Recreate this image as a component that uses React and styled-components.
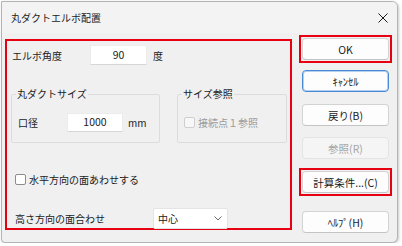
import styled, { createGlobalStyle, css } from 'styled-components'

const Global = createGlobalStyle`
  body {
    margin: 0;
    background: #ffffff;
    font-family: "Noto Sans CJK JP", "Noto Sans", sans-serif;
    font-size: 10px;
    color: #1b1b1b;
  }
`

const Window = styled.div`
  box-sizing: border-box;
  margin: 1px 0 0 1px;
  width: 397px;
  height: 242px;
  background: #f0f0f0;
  border: 1px solid #b4b4b4;
  border-radius: 0 6px 6px 4px;
  box-shadow: 1px 1px 3px rgba(0, 0, 0, 0.22);
  overflow: hidden;
`

const TitleBar = styled.div`
  height: 31px;
  display: flex;
  align-items: center;
  justify-content: space-between;
  padding: 0 9px;
  background: #f3f3f3;
  font-size: 10px;
`

const Body = styled.div`
  display: flex;
  padding: 2px 0 0 3px;
`

const Panel = styled.div`
  box-sizing: border-box;
  width: 287px;
  height: 191px;
  margin-top: 4px;
  border: 2px solid #e60012;
  padding: 4px 0 0 4px;
  display: flex;
  flex-direction: column;
`

const Row = styled.div`
  display: flex;
  align-items: center;
  margin-top: ${p => p.$mt || 0}px;
  margin-left: ${p => p.$ml || 0}px;
  height: ${p => p.$h || 20}px;
`

const Label = styled.span`
  width: ${p => p.$w}px;
  flex: none;
  white-space: nowrap;
`

const TextBox = styled.div`
  box-sizing: border-box;
  width: ${p => p.$w}px;
  height: ${p => p.$h || 20}px;
  background: #fff;
  border: 1px solid #ececec;
  border-bottom-color: #d6d6d6;
  display: flex;
  align-items: center;
  justify-content: center;
  font-size: 10.5px;
  padding-bottom: 2px;
`

const Unit = styled.span`
  margin-left: ${p => p.$ml || 6}px;
`

const Groups = styled.div`
  display: flex;
  gap: 17px;
  margin-top: 22px;
  align-items: stretch;
`

const Group = styled.fieldset`
  box-sizing: border-box;
  width: ${p => p.$w}px;
  margin: 0;
  border: 1px solid #dcdcdc;
  border-radius: 2px;
  padding: 12px 6px 10px 6px;
  min-width: 0;
`

const Legend = styled.legend`
  margin-left: -2px;
  padding: 0 1px;
  line-height: 14px;
  font-size: 10px;
`

const Box = styled.span`
  box-sizing: border-box;
  width: 11px;
  height: 11px;
  flex: none;
  background: #fff;
  border: 1px solid #8c8c8c;
  border-radius: 2px;
  margin-right: 3px;
  ${p => p.$disabled && css`
    background: #f7f7f7;
    border-color: #cfcfcf;
  `}
`

const CheckText = styled.span`
  color: ${p => (p.$disabled ? '#9c9c9c' : '#1b1b1b')};
  white-space: nowrap;
`

const Select = styled.div`
  box-sizing: border-box;
  width: 75px;
  height: 21px;
  background: #fff;
  border: 1px solid #e4e4e4;
  border-radius: 2px;
  display: flex;
  align-items: center;
  justify-content: space-between;
  padding: 0 5px 0 4px;
`

const Side = styled.div`
  display: flex;
  flex-direction: column;
  margin-left: 7px;
`

const RedFrame = styled.div`
  box-sizing: border-box;
  width: 93px;
  border: 2px solid #e60012;
  padding: 1px;
  margin-top: ${p => p.$mt || 0}px;
`

const Button = styled.div`
  box-sizing: border-box;
  width: 87px;
  height: 22px;
  margin-top: ${p => p.$mt || 0}px;
  margin-left: ${p => (p.$inFrame ? 0 : 3)}px;
  background: #fdfdfd;
  border: 1px solid #d3d3d3;
  border-bottom-color: #c4c4c4;
  border-radius: 4px;
  display: flex;
  align-items: center;
  justify-content: center;
  font-size: 10.5px;
  color: #1b1b1b;
  ${p => p.$focus && css`
    border: 1px solid #4a8ad4;
    box-shadow: inset 0 0 0 1px #b3d0f0;
  `}
  ${p => p.$disabled && css`
    background: #f5f5f5;
    border-color: #e4e4e4;
    color: #a5a5a5;
  `}
`

const CloseIcon = () => (
  <svg width="10" height="10" viewBox="0 0 10 10">
    <path d="M0.5 0.5L9.5 9.5M9.5 0.5L0.5 9.5" stroke="#1b1b1b" strokeWidth="1" />
  </svg>
)

const Chevron = () => (
  <svg width="8" height="5" viewBox="0 0 8 5">
    <path d="M0.5 0.5L4 4L7.5 0.5" fill="none" stroke="#6b6b6b" strokeWidth="1" />
  </svg>
)

const App = () => {
  return (
    <>
      <Global />
      <Window>
        <TitleBar>
          <span>丸ダクトエルボ配置</span>
          <CloseIcon />
        </TitleBar>
        <Body>
          <Panel>
            <Row $ml={1}>
              <Label $w={78}>エルボ角度</Label>
              <TextBox $w={57}>90</TextBox>
              <Unit>度</Unit>
            </Row>
            <Groups>
              <Group $w={149}>
                <Legend>丸ダクトサイズ</Legend>
                <Row $h={19}>
                  <Label $w={49}>口径</Label>
                  <TextBox $w={56} $h={19}>1000</TextBox>
                  <Unit $ml={5}>mm</Unit>
                </Row>
              </Group>
              <Group $w={110}>
                <Legend>サイズ参照</Legend>
                <Row $h={12} style={{ marginTop: 3 }}>
                  <Box $disabled />
                  <CheckText $disabled>接続点１参照</CheckText>
                </Row>
              </Group>
            </Groups>
            <Row $mt={31} $ml={4} $h={11}>
              <Box />
              <CheckText>水平方向の面あわせする</CheckText>
            </Row>
            <Row $mt={23} $ml={4} $h={21}>
              <Label $w={138}>高さ方向の面合わせ</Label>
              <Select>
                <span>中心</span>
                <Chevron />
              </Select>
            </Row>
          </Panel>
          <Side>
            <RedFrame>
              <Button $inFrame>OK</Button>
            </RedFrame>
            <Button $mt={7} $focus>ｷｬﾝｾﾙ</Button>
            <Button $mt={12}>戻り(B)</Button>
            <Button $mt={11} $disabled>参照(R)</Button>
            <RedFrame $mt={9}>
              <Button $inFrame>計算条件...(C)</Button>
            </RedFrame>
            <Button $mt={15}>ﾍﾙﾌﾟ(H)</Button>
          </Side>
        </Body>
      </Window>
    </>
  )
}

export default App
